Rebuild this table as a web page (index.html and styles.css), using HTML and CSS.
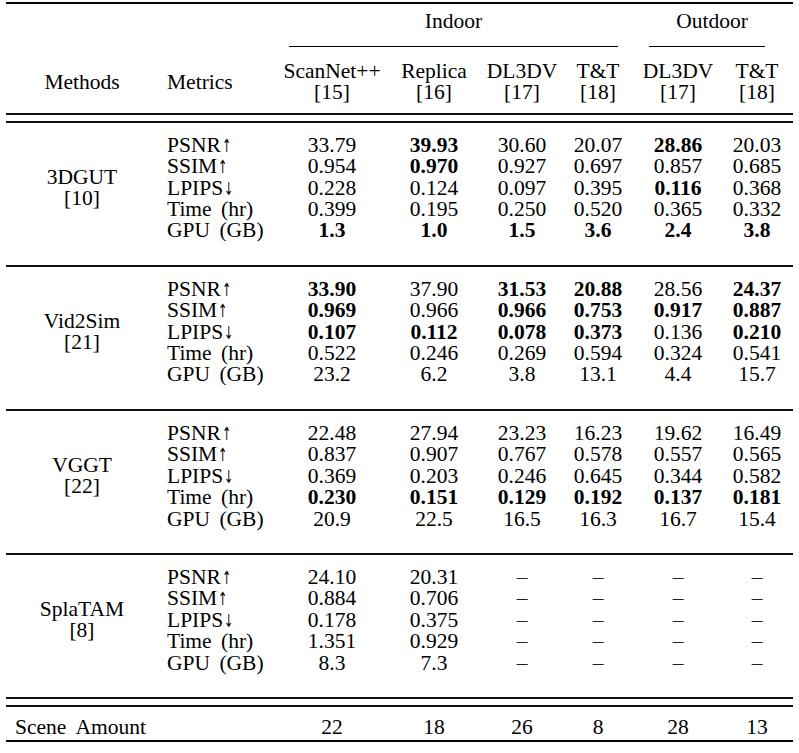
FILE: index.html
```html
<!DOCTYPE html>
<html lang="en">
<head>
<meta charset="utf-8">
<title>Results table</title>
<link rel="stylesheet" href="styles.css">
</head>
<body>
<div class="page">
<table class="results">
  <colgroup>
    <col class="c-method">
    <col class="c-metric">
    <col class="c-scannet">
    <col class="c-replica">
    <col class="c-dl3dv-in">
    <col class="c-tt-in">
    <col class="c-dl3dv-out">
    <col class="c-tt-out">
  </colgroup>
  <thead>
    <tr class="h1">
      <th></th>
      <th></th>
      <th colspan="4"><div class="span-rule indoor">Indoor</div></th>
      <th colspan="2"><div class="span-rule outdoor">Outdoor</div></th>
    </tr>
    <tr class="h2">
      <th class="method">Methods</th>
      <th class="metric">Metrics</th>
      <th>ScanNet++<br>[15]</th>
      <th>Replica<br>[16]</th>
      <th>DL3DV<br>[17]</th>
      <th>T&amp;T<br>[18]</th>
      <th>DL3DV<br>[17]</th>
      <th class="last">T&amp;T<br>[18]</th>
    </tr>
  </thead>
  <tbody class="sep"><tr><td colspan="8"></td></tr></tbody>
  <tbody class="grp">
    <tr>
      <th rowspan="5" class="method">3DGUT<br>[10]</th>
      <td class="metric">PSNR<span class="arr">↑</span></td><td>33.79</td><td class="best">39.93</td><td>30.60</td><td>20.07</td><td class="best">28.86</td><td class="last">20.03</td>
    </tr>
    <tr><td class="metric">SSIM<span class="arr">↑</span></td><td>0.954</td><td class="best">0.970</td><td>0.927</td><td>0.697</td><td>0.857</td><td class="last">0.685</td></tr>
    <tr><td class="metric">LPIPS<span class="arr">↓</span></td><td>0.228</td><td>0.124</td><td>0.097</td><td>0.395</td><td class="best">0.116</td><td class="last">0.368</td></tr>
    <tr><td class="metric">Time (hr)</td><td>0.399</td><td>0.195</td><td>0.250</td><td>0.520</td><td>0.365</td><td class="last">0.332</td></tr>
    <tr><td class="metric">GPU (GB)</td><td class="best">1.3</td><td class="best">1.0</td><td class="best">1.5</td><td class="best">3.6</td><td class="best">2.4</td><td class="best last">3.8</td></tr>
  </tbody>
  <tbody class="grp">
    <tr>
      <th rowspan="5" class="method">Vid2Sim<br>[21]</th>
      <td class="metric">PSNR<span class="arr">↑</span></td><td class="best">33.90</td><td>37.90</td><td class="best">31.53</td><td class="best">20.88</td><td>28.56</td><td class="best last">24.37</td>
    </tr>
    <tr><td class="metric">SSIM<span class="arr">↑</span></td><td class="best">0.969</td><td>0.966</td><td class="best">0.966</td><td class="best">0.753</td><td class="best">0.917</td><td class="best last">0.887</td></tr>
    <tr><td class="metric">LPIPS<span class="arr">↓</span></td><td class="best">0.107</td><td class="best">0.112</td><td class="best">0.078</td><td class="best">0.373</td><td>0.136</td><td class="best last">0.210</td></tr>
    <tr><td class="metric">Time (hr)</td><td>0.522</td><td>0.246</td><td>0.269</td><td>0.594</td><td>0.324</td><td class="last">0.541</td></tr>
    <tr><td class="metric">GPU (GB)</td><td>23.2</td><td>6.2</td><td>3.8</td><td>13.1</td><td>4.4</td><td class="last">15.7</td></tr>
  </tbody>
  <tbody class="grp">
    <tr>
      <th rowspan="5" class="method">VGGT<br>[22]</th>
      <td class="metric">PSNR<span class="arr">↑</span></td><td>22.48</td><td>27.94</td><td>23.23</td><td>16.23</td><td>19.62</td><td class="last">16.49</td>
    </tr>
    <tr><td class="metric">SSIM<span class="arr">↑</span></td><td>0.837</td><td>0.907</td><td>0.767</td><td>0.578</td><td>0.557</td><td class="last">0.565</td></tr>
    <tr><td class="metric">LPIPS<span class="arr">↓</span></td><td>0.369</td><td>0.203</td><td>0.246</td><td>0.645</td><td>0.344</td><td class="last">0.582</td></tr>
    <tr><td class="metric">Time (hr)</td><td class="best">0.230</td><td class="best">0.151</td><td class="best">0.129</td><td class="best">0.192</td><td class="best">0.137</td><td class="best last">0.181</td></tr>
    <tr><td class="metric">GPU (GB)</td><td>20.9</td><td>22.5</td><td>16.5</td><td>16.3</td><td>16.7</td><td class="last">15.4</td></tr>
  </tbody>
  <tbody class="grp final">
    <tr>
      <th rowspan="5" class="method">SplaTAM<br>[8]</th>
      <td class="metric">PSNR<span class="arr">↑</span></td><td>24.10</td><td>20.31</td><td class="na">–</td><td class="na">–</td><td class="na">–</td><td class="na last">–</td>
    </tr>
    <tr><td class="metric">SSIM<span class="arr">↑</span></td><td>0.884</td><td>0.706</td><td class="na">–</td><td class="na">–</td><td class="na">–</td><td class="na last">–</td></tr>
    <tr><td class="metric">LPIPS<span class="arr">↓</span></td><td>0.178</td><td>0.375</td><td class="na">–</td><td class="na">–</td><td class="na">–</td><td class="na last">–</td></tr>
    <tr><td class="metric">Time (hr)</td><td>1.351</td><td>0.929</td><td class="na">–</td><td class="na">–</td><td class="na">–</td><td class="na last">–</td></tr>
    <tr><td class="metric">GPU (GB)</td><td>8.3</td><td>7.3</td><td class="na">–</td><td class="na">–</td><td class="na">–</td><td class="na last">–</td></tr>
  </tbody>
  <tbody class="sep"><tr><td colspan="8"></td></tr></tbody>
  <tbody class="total">
    <tr>
      <th colspan="2" class="total-label">Scene Amount</th>
      <td>22</td><td>18</td><td>26</td><td>8</td><td>28</td><td class="last">13</td>
    </tr>
  </tbody>
</table>
</div>
</body>
</html>
```

FILE: styles.css
```css
html, body {
  margin: 0;
  padding: 0;
  background: #ffffff;
}

body {
  font-family: "Liberation Serif", "Times New Roman", Times, serif;
  font-size: 21.5px;
  color: #000000;
}

.page {
  padding: 2px 6px 0 6px;
}

.results {
  width: 787px;
  table-layout: fixed;
  border-collapse: collapse;
  border-top: 2px solid #000000;
  border-bottom: 2px solid #000000;
  line-height: 21.4px;
}

.c-method { width: 152px; }
.c-metric { width: 116px; }
.c-scannet { width: 116px; }
.c-replica { width: 88px; }
.c-dl3dv-in { width: 88px; }
.c-tt-in { width: 64px; }
.c-dl3dv-out { width: 96px; }
.c-tt-out { width: 67px; }

.results th,
.results td {
  padding: 0;
  font-weight: normal;
  text-align: center;
  vertical-align: middle;
  white-space: nowrap;
}

.results .last {
  padding-right: 5px;
}

.results .metric {
  text-align: left;
  padding-left: 9px;
  word-spacing: 4px;
}

.results .best {
  font-weight: bold;
}

.results .na {
  color: #222222;
}

.arr {
  display: inline-block;
  font-family: "DejaVu Sans", sans-serif;
  font-size: 18px;
  font-weight: normal;
  transform: scaleX(0.62);
  transform-origin: left center;
  margin-left: 1px;
  margin-right: -5px;
  color: #000000;
}

/* header */
.h1 th {
  padding-top: 7px;
}

.span-rule {
  border-bottom: 1px solid #000000;
  padding-bottom: 13.6px;
}

.span-rule.indoor {
  margin: 0 12px 0 15px;
}

.span-rule.outdoor {
  margin: 0 28px 0 19px;
  padding-left: 10px;
}

.h2 th {
  padding-top: 14px;
  padding-bottom: 9px;
}

.h2 {
  border-bottom: 2px solid #111111;
}

/* double-rule spacer */
.sep td {
  height: 6px;
  line-height: 0;
  font-size: 0;
}

/* groups */
.grp {
  border-top: 2px solid #111111;
}

.grp tr:first-child > td,
.grp tr:first-child > th {
  padding-top: 12px;
}

.grp tr:last-child > td {
  padding-bottom: 23px;
}

.grp th.method {
  padding-bottom: 23px;
}

.grp.final {
  border-bottom: 2px solid #111111;
}

/* total row */
.total {
  border-top: 2px solid #111111;
}

.total th,
.total td {
  padding-top: 10px;
  padding-bottom: 2px;
}

.total th.total-label {
  text-align: left;
  padding-left: 9px;
  word-spacing: 5px;
}
```
